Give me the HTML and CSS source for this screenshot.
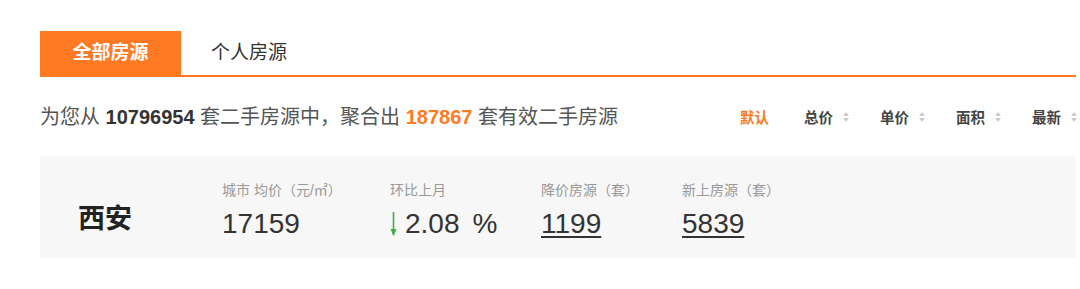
FILE: index.html
```html
<!DOCTYPE html>
<html lang="zh">
<head>
<meta charset="utf-8">
<link rel="stylesheet" href="styles.css">
</head>
<body>
<div class="wrap">
  <div class="tabs">
    <div class="tab active">全部房源</div>
    <div class="tab">个人房源</div>
  </div>
  <div class="summary">
    <div class="count">为您从 <b>10796954</b> 套二手房源中，聚合出 <b class="hl">187867</b> 套有效二手房源</div>
    <div class="sorts">
      <span class="sort on">默认</span>
      <span class="sort">总价<i class="arr"></i></span>
      <span class="sort">单价<i class="arr"></i></span>
      <span class="sort">面积<i class="arr"></i></span>
      <span class="sort">最新<i class="arr"></i></span>
    </div>
  </div>
  <div class="panel">
    <div class="city">西安</div>
    <div class="stat s1">
      <div class="label">城市 均价（元/㎡）</div>
      <div class="value">17159</div>
    </div>
    <div class="stat s2">
      <div class="label">环比上月</div>
      <div class="value"><svg class="down" width="7" height="26" viewBox="0 0 7 26"><path d="M3.5 1 V24" stroke="#3cb043" stroke-width="1.6" fill="none"/><path d="M0.5 18 L3.5 25 L6.5 18 Z" fill="#3cb043"/></svg>2.08<span class="pct">%</span></div>
    </div>
    <div class="stat s3">
      <div class="label">降价房源（套）</div>
      <div class="value link">1199</div>
    </div>
    <div class="stat s4">
      <div class="label">新上房源（套）</div>
      <div class="value link">5839</div>
    </div>
  </div>
</div>
</body>
</html>
```
FILE: styles.css
```css
html, body {
  margin: 0;
  padding: 0;
  background: #fff;
}
body {
  font-family: "Liberation Sans", "Noto Sans CJK SC", sans-serif;
  color: #333;
}
.wrap {
  width: 1036px;
  margin-left: 40px;
  padding-top: 31px;
}
.tabs {
  display: flex;
  height: 44px;
  border-bottom: 2px solid #ff7a22;
}
.tab {
  font-size: 19px;
  line-height: 44px;
  color: #333;
}
.tab.active {
  width: 141px;
  text-align: center;
  background: #ff7a22;
  color: #fff;
  font-weight: bold;
}
.tab + .tab {
  margin-left: 30px;
}
.summary {
  display: flex;
  justify-content: space-between;
  align-items: center;
  height: 79px;
}
.count {
  font-size: 20px;
  color: #555;
  margin-top: -2px;
}
.count b {
  color: #333;
}
.count b.hl {
  color: #ff7a22;
}
.sorts {
  display: flex;
  align-items: center;
  margin-right: -1px;
}
.sort {
  font-size: 14.5px;
  font-weight: bold;
  color: #444;
  display: flex;
  align-items: center;
  margin-left: 31px;
}
.sort.on {
  color: #ff7a22;
  margin-right: 4px;
}
.arr {
  display: inline-block;
  position: relative;
  width: 6px;
  height: 10px;
  margin-left: 10px;
}
.arr::before, .arr::after {
  content: "";
  position: absolute;
  left: 0;
  border-left: 3px solid transparent;
  border-right: 3px solid transparent;
}
.arr::before {
  top: 0;
  border-bottom: 4px solid #ccc;
}
.arr::after {
  bottom: 0;
  border-top: 4px solid #ccc;
}
.panel {
  display: flex;
  align-items: center;
  height: 102px;
  background: #f7f7f7;
}
.city {
  font-size: 27px;
  font-weight: bold;
  color: #222;
  margin-left: 38px;
  width: 144px;
  margin-top: 18px;
}
.stat {
  margin-top: 8px;
}
.s1 { width: 168px; }
.s2 { width: 151px; }
.s3 { width: 141px; }
.label {
  font-size: 14px;
  color: #999;
  line-height: 18px;
}
.value {
  font-size: 28px;
  color: #333;
  line-height: 34px;
  margin-top: 8px;
  display: flex;
  align-items: center;
}
.value.link {
  display: block;
  text-decoration: underline;
  text-decoration-thickness: 2px;
  text-underline-offset: 3px;
}
.down {
  display: block;
  margin-right: 8px;
}
.pct {
  margin-left: 13px;
}
```
